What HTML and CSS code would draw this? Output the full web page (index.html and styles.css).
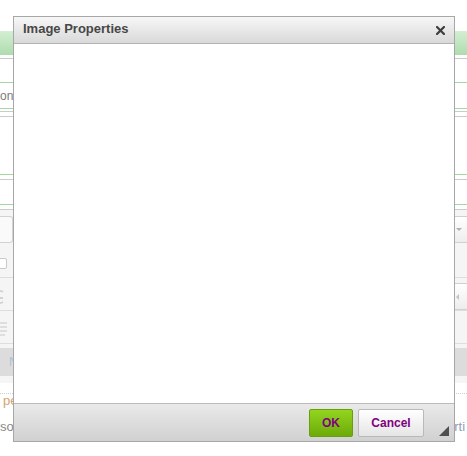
FILE: index.html
```html
<!DOCTYPE html>
<html>
<head>
<meta charset="utf-8">
<title>Image Properties</title>
<link rel="stylesheet" href="styles.css">
</head>
<body>
<div class="bg">
  <div class="sp sp-31"></div>
  <div class="greenband"></div>
  <div class="sp sp-3"></div>
  <div class="line line-gray"></div>
  <div class="sp sp-23"></div>
  <div class="line line-green"></div>
  <div class="caption-row"><span class="caption-label">on:</span></div>
  <div class="line line-green"></div>
  <div class="sp sp-2"></div>
  <div class="line line-gray"></div>
  <div class="sp sp-4"></div>
  <div class="line line-gray"></div>
  <div class="sp sp-57"></div>
  <div class="line line-green"></div>
  <div class="sp sp-4"></div>
  <div class="line line-gray"></div>
  <div class="sp sp-24"></div>
  <div class="line line-green"></div>
  <div class="sp sp-4"></div>
  <div class="line line-gray"></div>
  <div class="panel">
    <div class="prow prow-1">
      <div class="field-left"></div>
      <div class="field-right"><span class="arrow-down"></span></div>
    </div>
    <div class="prow prow-2">
      <div class="checkbox"></div>
    </div>
    <div class="prow prow-3">
      <svg class="icon-g" width="8" height="14" viewBox="0 0 8 14"><path d="M6 2 A6 6 0 1 0 6 12" fill="none" stroke="#d2d2d2" stroke-width="2"/><path d="M2 8 H6" stroke="#d2d2d2" stroke-width="2"/></svg>
      <div class="field-right field-right-2"><span class="arrow-left"></span></div>
    </div>
    <div class="prow prow-4">
      <svg class="icon-list" width="7" height="16" viewBox="0 0 7 16"><path d="M0 1H7M0 5H7M0 9H7M0 13H5" stroke="#d6d6d6" stroke-width="1.4"/></svg>
    </div>
    <div class="sp sp-4"></div>
    <div class="graybar"><span class="graybar-text">N</span></div>
    <div class="sp sp-7"></div>
  </div>
  <div class="sp sp-10"></div>
  <div class="dotted"></div>
  <div class="txt-row txt-row-1"><span class="txt-pe">pe</span></div>
  <div class="sp sp-9"></div>
  <div class="txt-row txt-row-2"><span class="txt-so">so</span><span class="txt-rti">arti</span></div>
</div>

<div class="dialog">
  <div class="d-title">
    <span class="d-title-text">Image Properties</span>
    <svg class="d-close" width="9" height="9" viewBox="0 0 9 9"><path d="M1 1L8 8M8 1L1 8" stroke="#3e3e3e" stroke-width="2.2" stroke-linecap="square"/></svg>
  </div>
  <div class="d-body"></div>
  <div class="d-foot">
    <button class="btn btn-ok" type="button">OK</button>
    <button class="btn btn-cancel" type="button">Cancel</button>
    <span class="grip"></span>
  </div>
</div>
</body>
</html>
```
FILE: styles.css
```css
* { box-sizing: border-box; }
html, body { margin: 0; padding: 0; }
body {
  width: 467px;
  height: 456px;
  overflow: hidden;
  position: relative;
  background: #fff;
  font-family: "Liberation Sans", Arial, sans-serif;
}

.bg { width: 467px; }
.sp-2 { height: 2px; }
.sp-3 { height: 3px; }
.sp-4 { height: 4px; }
.sp-7 { height: 7px; }
.sp-9 { height: 9px; }
.sp-10 { height: 10px; }
.sp-23 { height: 23px; }
.sp-24 { height: 24px; }
.sp-31 { height: 31px; }
.sp-57 { height: 57px; }

.greenband { height: 24px; background: linear-gradient(#d3eed3, #aedcae); }
.line { height: 1px; }
.line-gray { background: #cbcbcb; }
.line-green { background: #a3d8a3; }

.caption-row {
  height: 25px;
  line-height: 27px;
  font-size: 12px;
  color: #7c7c7c;
}
.caption-label { display: inline-block; margin-left: 0; }

.panel {
  height: 173px;
  background: #f5f5f5;
  display: flex;
  flex-direction: column;
}
.prow { display: flex; justify-content: space-between; align-items: flex-start; }
.prow-1 { height: 34px; padding-top: 6px; }
.prow-2 { height: 34px; padding-top: 14px; border-bottom: 1px solid #dedede; }
.prow-3 { height: 33px; padding-top: 5px; border-bottom: 1px solid #dedede; }
.prow-4 { height: 33px; padding-top: 11px; border-bottom: 1px solid #dedede; }

.field-left {
  width: 13px;
  height: 27px;
  border: 1px solid #d2d2d2;
  border-left: none;
  border-radius: 0 3px 3px 0;
  background: #fafafa;
}
.field-right {
  width: 15px;
  height: 27px;
  border: 1px solid #d0d0d0;
  border-right: none;
  border-radius: 3px 0 0 3px;
  background: linear-gradient(#ffffff, #ededed);
  display: flex;
  align-items: center;
  padding-left: 3px;
}
.field-right-2 { height: 27px; }
.arrow-down {
  width: 0; height: 0;
  border-left: 3px solid transparent;
  border-right: 3px solid transparent;
  border-top: 3px solid #b0b0b0;
}
.arrow-left {
  width: 0; height: 0;
  border-top: 3px solid transparent;
  border-bottom: 3px solid transparent;
  border-right: 3px solid #c4c4c4;
}
.checkbox {
  width: 10px;
  height: 11px;
  margin-left: -3px;
  border: 1px solid #c9c9c9;
  border-radius: 2px;
  background: #fff;
}
.icon-g { margin-left: -3px; margin-top: 7px; }
.icon-list { margin-left: 0; }

.graybar {
  height: 28px;
  background: #dcdcdc;
  font-size: 12px;
  line-height: 28px;
  color: #a9c1d8;
  padding-left: 9px;
}

.dotted { height: 1px; border-top: 1px dotted #cfcfcf; }
.txt-row { height: 16px; line-height: 16px; font-size: 13px; display: flex; }
.txt-row-1 { line-height: 14px; }
.txt-pe { color: #d6a36e; padding-left: 3px; }
.txt-so { color: #8a8a8a; }
.txt-rti { color: #8d9db5; margin-left: auto; width: 20px; white-space: nowrap; }

.dialog {
  position: absolute;
  left: 13px;
  top: 16px;
  width: 442px;
  height: 426px;
  border: 1px solid #a7a7a7;
  background: #fff;
  display: flex;
  flex-direction: column;
}
.d-title {
  height: 27px;
  padding: 0 9px 2px 9px;
  border-bottom: 1px solid #b3b3b3;
  background: linear-gradient(#f7f7f7, #d9d9d9);
  display: flex;
  align-items: center;
  justify-content: space-between;
}
.d-title-text {
  font-size: 13px;
  font-weight: bold;
  line-height: 24px;
  color: #474747;
}
.d-close { margin-top: 3px; }
.d-body { flex: 1; background: #fff; }
.d-foot {
  height: 38px;
  border-top: 1px solid #bababa;
  background: linear-gradient(#e9e9e9, #d1d1d1);
  display: flex;
  justify-content: flex-end;
  align-items: flex-start;
  gap: 5px;
  padding: 5px 30px 0 0;
  position: relative;
}
.btn {
  height: 28px;
  margin: 0;
  padding: 0;
  border-radius: 2px;
  font-family: "Liberation Sans", Arial, sans-serif;
  font-size: 12px;
  font-weight: bold;
  color: #800080;
  line-height: 26px;
  text-align: center;
}
.btn-ok {
  width: 44px;
  border: 1px solid #67a00c;
  background: linear-gradient(#93d41f, #6cab08);
}
.btn-cancel {
  width: 66px;
  border: 1px solid #b9b9b9;
  background: linear-gradient(#ffffff, #e5e5e5);
}
.grip {
  position: absolute;
  right: 5px;
  bottom: 5px;
  width: 10px;
  height: 10px;
  background: #4e4e4e;
  clip-path: polygon(100% 0, 100% 100%, 0 100%);
}
```
